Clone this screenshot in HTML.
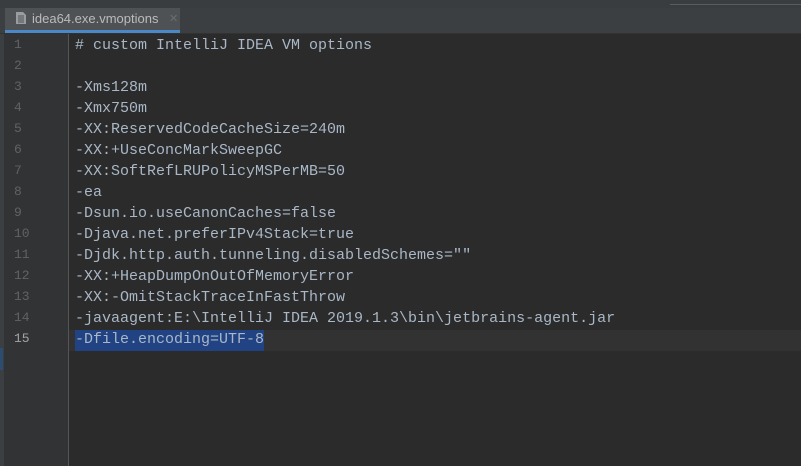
<!DOCTYPE html>
<html><head><style>
body{margin:0;width:801px;height:466px;background:#2b2b2b;overflow:hidden;position:relative;font-family:"Liberation Mono",monospace}
.top{position:absolute;left:0;top:0;width:801px;height:8px;background:#3a3d3f}
.tabbar{position:absolute;left:0;top:8px;width:801px;height:25px;background:#3c3f41;border-bottom:1px solid #323232}
.tab{position:absolute;left:5px;top:8px;width:175px;height:22px;background:#4e5254;border-bottom:3px solid #4a88c7;box-sizing:content-box}
.tab span{position:absolute;left:27px;top:3px;font:13px "Liberation Sans",sans-serif;color:#bbbbbb}
.tab i{position:absolute;left:164px;top:4px;font:11px "Liberation Sans",sans-serif;color:#6b6e70;font-style:normal}
.gut{position:absolute;left:0;top:34px;width:68px;height:432px;background:#313335;border-right:1px solid #555}
.strip{position:absolute;left:0;top:34px;width:4px;height:432px;background:#3c3f41}
.bl{position:absolute;left:0;top:348px;width:3px;height:22px;background:#2d4d70}
.ln{position:absolute;left:0;width:54px;text-align:left;padding-left:14px;font-size:13px;color:#606366}
.code{position:absolute;left:75px;font-size:15px;color:#a9b7c6;white-space:pre;line-height:21px}
.cur{position:absolute;left:69px;top:330px;width:732px;height:21px;background:#323232}
.sel{position:absolute;left:75px;top:330px;width:189px;height:21px;background:#214283}
.topsearch{position:absolute;left:670px;top:0;width:131px;height:4px;border-bottom:1px solid #5a5d5f}
</style></head><body>
<div class="top"></div><div class="topsearch"></div>
<div class="tabbar"></div>
<div class="tab"><svg style="position:absolute;left:10px;top:3px" width="12" height="14"><path d="M1 1h7l3 3v9H1z" fill="#9a9da0"/><path d="M3 5h6M3 7h6M3 9h6M3 11h6" stroke="#4e5254" stroke-width="1"/></svg><span>idea64.exe.vmoptions</span><i>✕</i></div>
<div class="gut"></div><div class="strip"></div><div class="bl"></div>
<div class="cur"></div><div class="sel"></div>
<div id="lns"></div>
<div class="ln" style="top:37px">1</div><div class="ln" style="top:58px">2</div><div class="ln" style="top:79px">3</div><div class="ln" style="top:100px">4</div><div class="ln" style="top:121px">5</div><div class="ln" style="top:142px">6</div><div class="ln" style="top:163px">7</div><div class="ln" style="top:184px">8</div><div class="ln" style="top:205px">9</div><div class="ln" style="top:226px">10</div><div class="ln" style="top:247px">11</div><div class="ln" style="top:268px">12</div><div class="ln" style="top:289px">13</div><div class="ln" style="top:310px">14</div><div class="ln" style="top:331px;color:#a4a3a3">15</div>
<div class="code" style="top:35px"># custom IntelliJ IDEA VM options

-Xms128m
-Xmx750m
-XX:ReservedCodeCacheSize=240m
-XX:+UseConcMarkSweepGC
-XX:SoftRefLRUPolicyMSPerMB=50
-ea
-Dsun.io.useCanonCaches=false
-Djava.net.preferIPv4Stack=true
-Djdk.http.auth.tunneling.disabledSchemes=""
-XX:+HeapDumpOnOutOfMemoryError
-XX:-OmitStackTraceInFastThrow
-javaagent:E:\IntelliJ IDEA 2019.1.3\bin\jetbrains-agent.jar
-Dfile.encoding=UTF-8</div>
</body></html>
